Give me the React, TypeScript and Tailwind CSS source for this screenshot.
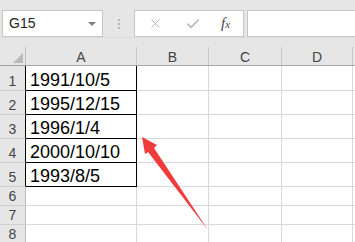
import { X, Check } from "lucide-react";

const dates = ["1991/10/5", "1995/12/15", "1996/1/4", "2000/10/10", "1993/8/5"];

const rowHeights = ["h-[25px]", "h-[24px]", "h-[24px]", "h-[24px]", "h-[24px]", "h-[19px]", "h-[19px]", "h-[19px]"];

const Toolbar = () => (
  <div className="h-[47px] bg-[#e6e6e6] relative flex items-start pt-[10px] pl-[2px]">
    <div className="w-[101px] h-[27px] bg-white border border-[#c6c6c6] flex items-center justify-between pl-[6px] pr-[6px]">
      <span className="text-[14px] text-[#222]">G15</span>
      <span className="w-0 h-0 border-l-[4px] border-r-[4px] border-t-[4px] border-l-transparent border-r-transparent border-t-[#808080]" />
    </div>
    <div className="w-[31px] h-[27px] flex flex-col items-center justify-center gap-[2px]">
      <span className="w-[2px] h-[2px] bg-[#b4b4b4]" />
      <span className="w-[2px] h-[2px] bg-[#b4b4b4]" />
      <span className="w-[2px] h-[2px] bg-[#b4b4b4]" />
    </div>
    <div className="w-[110px] h-[27px] bg-white border border-[#c6c6c6] flex items-center pl-[13px]">
      <X size={15} strokeWidth={1.6} color="#b3b3b3" />
      <Check size={16} strokeWidth={2.4} color="#b8b8b8" className="ml-[22px]" />
      <span className="ml-[20px] italic text-[15px] text-[#444]" style={{ fontFamily: '"Liberation Serif", serif' }}>
        f<span className="text-[11px]">x</span>
      </span>
    </div>
    <div className="ml-[3px] flex-1 h-[27px] bg-white border border-[#c6c6c6] border-r-0" />
    <div className="absolute left-0 right-0 top-[37px] h-px bg-[#dcdcdc]" />
  </div>
);

const HeaderRow = () => (
  <div className="flex h-[19px] bg-[#e6e6e6] border-b border-[#a6a6a6] text-[14px] text-[#444]">
    <div className="w-[26px] relative border-r border-[#bdbdbd]">
      <svg className="absolute right-[2px] bottom-[2px]" width="10" height="10">
        <polygon points="10,0 10,10 0,10" fill="#b9b9b9" />
      </svg>
    </div>
    <div className="w-[111px] border-r border-[#c8c8c8] flex items-end justify-center leading-[16px]">A</div>
    <div className="w-[72px] border-r border-[#c8c8c8] flex items-end justify-center leading-[16px]">B</div>
    <div className="w-[73px] border-r border-[#c8c8c8] flex items-end justify-center leading-[16px]">C</div>
    <div className="w-[71px] border-r border-[#c8c8c8] flex items-end justify-center leading-[16px]">D</div>
    <div className="flex-1" />
  </div>
);

const App = () => {
  return (
    <div className="w-[355px] h-[242px] relative overflow-hidden bg-white" style={{ fontFamily: '"Liberation Sans", Arial, sans-serif' }}>
      <Toolbar />
      <HeaderRow />
      {rowHeights.map((h, i) => {
        const boxed = i < 5;
        return (
          <div key={i} className={`flex ${h}`}>
            <div className={`w-[26px] bg-[#e6e6e6] border-b border-[#d0d0d0] border-r ${boxed ? "border-r-black" : "border-r-[#bdbdbd]"} flex items-end justify-center text-[14px] text-[#444] leading-[16px] pb-[1px]`}>
              {i + 1}
            </div>
            <div className={`w-[111px] border-r border-b ${boxed ? "border-black" : "border-[#d9d9d9]"} flex items-end pl-[4px] text-[18px] text-black leading-[18px] pb-[1px]`}>
              {boxed ? dates[i] : ""}
            </div>
            <div className="w-[72px] border-r border-b border-[#d9d9d9]" />
            <div className="w-[73px] border-r border-b border-[#d9d9d9]" />
            <div className="w-[71px] border-r border-b border-[#d9d9d9]" />
            <div className="flex-1 border-b border-[#d9d9d9]" />
          </div>
        );
      })}
      <svg className="absolute left-0 top-0" width="355" height="242">
        <polygon points="142,137 157,145 154,148 208,230 148,152 145,154" fill="#f03b3b" />
      </svg>
    </div>
  );
};

export default App;
